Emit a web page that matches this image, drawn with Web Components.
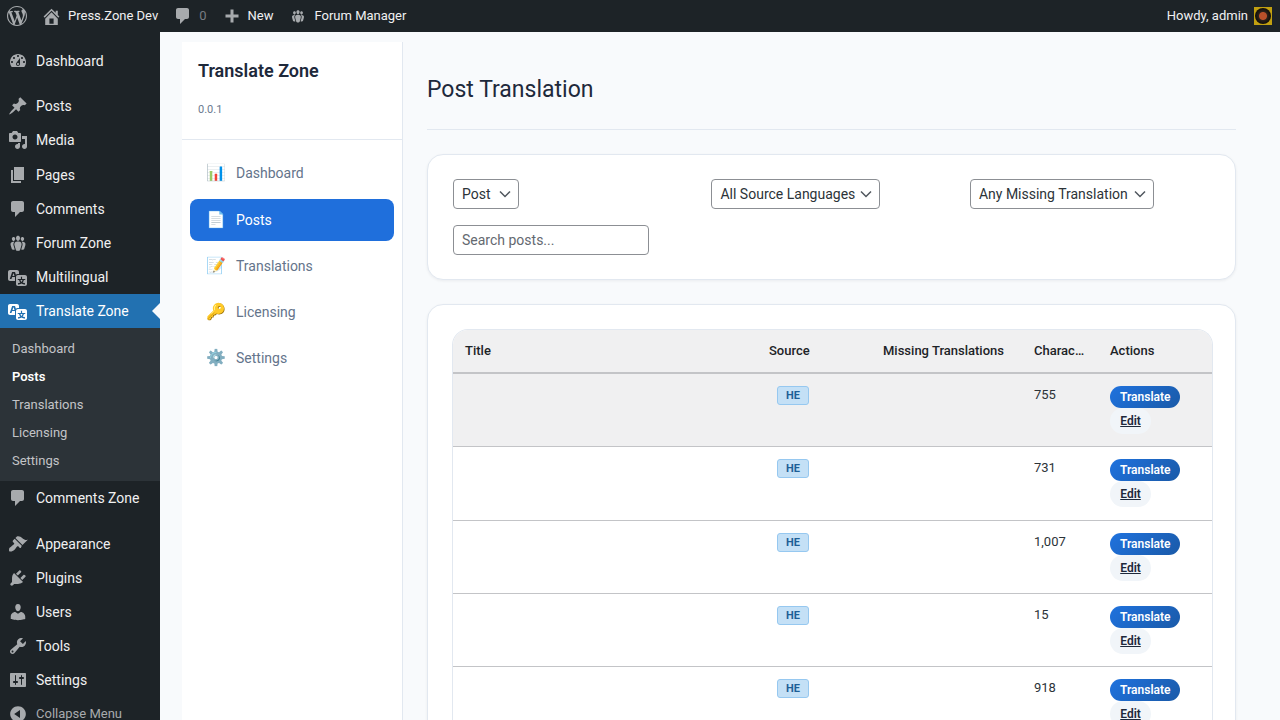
<!DOCTYPE html>
<html lang="en">
<head>
<meta charset="utf-8">
<title>Post Translation</title>
<style>
html, body { margin: 0; height: 720px; overflow: hidden; background: #f8fafc; }
body { font-family: Roboto, "Liberation Sans", sans-serif; display: grid; grid-template-rows: 32px 1fr; grid-template-columns: 160px 1fr; }
wp-admin-bar { grid-column: 1 / 3; }
</style>
</head>
<body>
<wp-admin-bar></wp-admin-bar>
<wp-side-menu></wp-side-menu>
<tz-app></tz-app>

<script>
// ── Dashicons (20x20) ───────────────────────────────────
const ICONS = {
    wp: 'M20 10c0-5.51-4.49-10-10-10C4.48 0 0 4.49 0 10c0 5.52 4.48 10 10 10 5.51 0 10-4.48 10-10zM7.78 15.37L4.37 6.22c.55-.02 1.17-.08 1.17-.08.5-.06.44-1.13-.06-1.11 0 0-1.45.11-2.37.11-.18 0-.37 0-.58-.01C4.12 2.69 6.87 1.11 10 1.11c2.33 0 4.45.87 6.05 2.34-.68-.11-1.65.39-1.65 1.58 0 .74.45 1.36.9 2.1.35.61.55 1.36.55 2.46 0 1.49-1.4 5-1.4 5l-3.03-8.37c.54-.02.82-.17.82-.17.5-.05.44-1.25-.06-1.22 0 0-1.44.12-2.38.12-.87 0-2.33-.12-2.33-.12-.5-.03-.56 1.2-.06 1.22l.92.08 1.26 3.41zM17.41 10c.24-.64.74-1.87.43-4.25.7 1.29 1.05 2.71 1.05 4.25 0 3.29-1.73 6.24-4.4 7.78.97-2.59 1.94-5.2 2.92-7.78zM6.1 18.09C3.12 16.65 1.11 13.53 1.11 10c0-1.3.23-2.48.72-3.59C3.25 10.3 4.67 14.2 6.1 18.09zm4.03-6.63l2.58 6.98c-.86.29-1.76.45-2.71.45-.79 0-1.57-.11-2.29-.33.81-2.38 1.62-4.74 2.42-7.1z',
    home: 'M16 8.5l1.53 1.53-1.06 1.06L10 4.62l-6.47 6.47-1.06-1.06L10 2.5l4 4v-2h2v4zm-6-2.46l6 5.99V18H4v-5.97zM12 17v-5H8v5h4z',
    plus: 'M16.5 8.5v3h-5v5h-3v-5h-5v-3h5v-5h3v5z',
    dashboard: 'M3.76 16h12.48c1.1-1.37 1.76-3.11 1.76-5 0-4.42-3.58-8-8-8s-8 3.58-8 8c0 1.89.66 3.63 1.76 5zM10 4c.55 0 1 .45 1 1s-.45 1-1 1-1-.45-1-1 .45-1 1-1zM6 6c.55 0 1 .45 1 1s-.45 1-1 1-1-.45-1-1 .45-1 1-1zm8 0c.55 0 1 .45 1 1s-.45 1-1 1-1-.45-1-1 .45-1 1-1zm-5.37 5.55L12 7v6c0 1.1-.9 2-2 2s-2-.9-2-2c0-.57.24-1.08.63-1.45zM4 10c.55 0 1 .45 1 1s-.45 1-1 1-1-.45-1-1 .45-1 1-1zm12 0c.55 0 1 .45 1 1s-.45 1-1 1-1-.45-1-1 .45-1 1-1zm-5 3c0-.55-.45-1-1-1s-1 .45-1 1 .45 1 1 1 1-.45 1-1z',
    pin: 'M10.44 3.02l1.82-1.82 6.36 6.35-1.83 1.82c-1.05-.68-2.48-.57-3.41.36l-.75.75c-.92.93-1.04 2.35-.35 3.41l-1.83 1.82-2.41-2.41-2.8 2.79c-.42.42-3.38 2.71-3.8 2.29s1.86-3.39 2.28-3.81l2.79-2.79L4.1 9.36l1.83-1.82c1.05.69 2.48.57 3.4-.36l.75-.75c.93-.92 1.05-2.35.36-3.41z',
    media: 'M13 11V4c0-.55-.45-1-1-1h-1.67L9 1H5L3.67 3H2c-.55 0-1 .45-1 1v7c0 .55.45 1 1 1h10c.55 0 1-.45 1-1zM7 4.5c1.38 0 2.5 1.12 2.5 2.5S8.38 9.5 7 9.5 4.5 8.38 4.5 7 5.62 4.5 7 4.5zM14 6h5v10.5c0 1.38-1.12 2.5-2.5 2.5S14 17.88 14 16.5s1.12-2.5 2.5-2.5c.17 0 .34.02.5.05V9h-3V6zm-4 8.05V13h2v3.5c0 1.38-1.12 2.5-2.5 2.5S7 17.88 7 16.5 8.12 14 9.5 14c.17 0 .34.02.5.05z',
    page: 'M6 15V2h10v13H6zm-1 1h8v2H3V5h2v11z',
    comment: 'M5 2h9c1.1 0 2 .9 2 2v7c0 1.1-.9 2-2 2h-2l-5 5v-5H5c-1.1 0-2-.9-2-2V4c0-1.1.9-2 2-2z',
    groups: 'M8.03 4.46c-.29 1.28.55 3.46 1.97 3.46 1.41 0 2.25-2.18 1.96-3.46-.22-.98-1.08-1.63-1.96-1.63-.89 0-1.74.65-1.97 1.63zm-4.13.9c-.25 1.08.47 2.93 1.67 2.93s1.92-1.85 1.67-2.93c-.19-.83-.92-1.39-1.67-1.39s-1.48.56-1.67 1.39zm8.86 0c-.25 1.08.47 2.93 1.66 2.93 1.2 0 1.92-1.85 1.67-2.93-.19-.83-.92-1.39-1.67-1.39-.74 0-1.47.56-1.66 1.39zm-.59 11.43l1.25-4.3C14.2 10 12.71 8.47 10 8.47c-2.72 0-4.21 1.53-3.44 4.02l1.26 4.3C8.05 17.51 9 18 10 18c.98 0 1.94-.49 2.17-1.21zm-6.1-7.63c-.49.67-.96 1.83-.42 3.59l1.12 3.79c-.34.2-.77.31-1.2.31-.85 0-1.65-.41-1.85-1.03l-1.07-3.65c-.65-2.11.61-3.4 2.92-3.4.27 0 .54.02.79.06-.1.1-.2.22-.29.33zm8.35-.39c2.31 0 3.58 1.29 2.92 3.4l-1.07 3.65c-.2.62-1 1.03-1.85 1.03-.43 0-.86-.11-1.2-.31l1.11-3.77c.55-1.78.08-2.94-.42-3.61-.08-.11-.18-.23-.28-.33.25-.04.51-.06.79-.06z',
    translation: 'M11 7H9.49c-.63 0-1.25.3-1.59.7L7 5H4.13l-2.39 7h1.69l.74-2H7v4H2c-1.1 0-2-.9-2-2V5c0-1.1.9-2 2-2h7c1.1 0 2 .9 2 2v2zM6.51 9H4.49l1-2.93zM10 8h7c1.1 0 2 .9 2 2v7c0 1.1-.9 2-2 2h-7c-1.1 0-2-.9-2-2v-7c0-1.1.9-2 2-2zm7.25 5v-1.08h-3.17V9.75h-1.16v2.17H9.75V13h1.28c.11.85.56 1.85 1.28 2.62-.87.36-1.89.62-2.31.62-.01.02.22.97.2 1.46.84 0 2.21-.5 3.28-1.15 1.09.65 2.48 1.15 3.34 1.15-.02-.49.2-1.44.2-1.46-.43 0-1.49-.27-2.38-.63.7-.77 1.14-1.77 1.25-2.61h1.05zm-3.81 1.93c-.5-.46-.85-1.13-1.01-1.93h2.09c-.17.8-.51 1.47-1 1.93l-.04.03s-.03-.02-.04-.03z',
    appearance: 'M14.48 11.06L7.41 3.99l1.5-1.5c.5-.56 2.3-.47 3.51.32 1.21.8 1.43 1.28 2.91 2.1 1.18.64 2.45 1.26 4.45.85zm-.71.71L6.7 4.7 4.93 6.47c-.39.39-.39 1.02 0 1.41l1.06 1.06c.39.39.39 1.03 0 1.42-.6.6-1.43 1.11-2.21 1.69-.35.26-.7.53-1.01.84C1.43 13.23.99 14.41 1.01 16.23c.02.23.05.47.11.69.23.31.6.54 1.09.63 1.82.02 3-.42 4.34-1.76.31-.31.58-.66.84-1.01.58-.78 1.09-1.61 1.69-2.21.39-.39 1.03-.39 1.42 0l1.06 1.06c.39.39 1.02.39 1.41 0z',
    plugins: 'M13.11 4.36L9.87 7.6 8 5.73l3.24-3.24c.35-.34 1.05-.2 1.56.32.52.51.66 1.21.31 1.55zm-8 1.77l.91-1.12 9.01 9.01-1.19.84c-.71.71-2.63 1.16-3.82 1.16H6.14L4.9 17.26c-.59.59-1.54.59-2.12 0-.59-.58-.59-1.53 0-2.12l1.24-1.24v-3.88c0-1.13.4-3.19 1.09-3.89zm7.26 3.97l3.24-3.24c.34-.35 1.04-.21 1.55.31.52.51.66 1.21.31 1.55l-3.24 3.25z',
    users: 'M10 9.25c-2.27 0-2.73-3.44-2.73-3.44C7 4.02 7.82 2 9.97 2c2.16 0 2.98 2.02 2.71 3.81 0 0-.41 3.44-2.68 3.44zm0 2.57L12.72 10c2.39 0 4.52 2.33 4.52 4.53v2.49s-3.65 1.13-7.24 1.13c-3.65 0-7.24-1.13-7.24-1.13v-2.49c0-2.25 1.94-4.48 4.47-4.48z',
    tools: 'M16.68 9.77c-1.34 1.34-3.3 1.67-4.95.99l-5.41 6.52c-.99.99-2.59.99-3.58 0s-.99-2.59 0-3.57l6.52-5.42c-.68-1.65-.35-3.61.99-4.95 1.28-1.28 3.12-1.62 4.72-1.06l-2.89 2.89 2.82 2.82 2.86-2.87c.53 1.58.18 3.39-1.08 4.65zM3.81 16.21c.4.39 1.04.39 1.43 0 .4-.4.4-1.04 0-1.43-.39-.4-1.03-.4-1.43 0-.39.39-.39 1.03 0 1.43z',
    settings: 'M18 16V4c0-.55-.45-1-1-1H3c-.55 0-1 .45-1 1v12c0 .55.45 1 1 1h14c.55 0 1-.45 1-1zM8 11h1c.55 0 1 .45 1 1s-.45 1-1 1H8v1.5c0 .28-.22.5-.5.5s-.5-.22-.5-.5V13H6c-.55 0-1-.45-1-1s.45-1 1-1h1V5.5c0-.28.22-.5.5-.5s.5.22.5.5V11zm5-2h-1c-.55 0-1-.45-1-1s.45-1 1-1h1V5.5c0-.28.22-.5.5-.5s.5.22.5.5V7h1c.55 0 1 .45 1 1s-.45 1-1 1h-1v5.5c0 .28-.22.5-.5.5s-.5-.22-.5-.5V9z',
    collapse: 'M10 2.16c4.33 0 7.84 3.51 7.84 7.84s-3.51 7.84-7.84 7.84S2.16 14.33 2.16 10 5.71 2.16 10 2.16zm2 11.72V6.12L6.18 9.97z',
};
const icon = (name, size = 20) =>
    `<svg width="${size}" height="${size}" viewBox="0 0 20 20" fill="currentColor" fill-rule="evenodd" aria-hidden="true"><path d="${ICONS[name]}"/></svg>`;

// ── Admin bar ───────────────────────────────────────────
class WpAdminBar extends HTMLElement {
    connectedCallback() {
        const shadow = this.attachShadow({ mode: 'open' });
        shadow.innerHTML = `
<style>
:host { display: flex; height: 32px; align-items: center; background: #1d2327; color: #f0f0f1; font: 13px/32px Roboto, sans-serif; }
svg { color: #a7aaad; flex: none; display: block; }
.item { display: flex; align-items: center; gap: 6px; }
.logo { margin-left: 7px; }
.home { margin-left: 14px; }
.comments { margin-left: 15px; }
.comments span { color: #787c82; }
.new { margin-left: 15px; }
.forum { margin-left: 17px; gap: 8px; }
.howdy { margin-left: auto; margin-right: 8px; }
.avatar { width: 18px; height: 18px; background: #c2a010; display: grid; place-items: center; }
.avatar i { width: 16px; height: 16px; border-radius: 50%; background: radial-gradient(circle at 50% 50%, #b8502a 0 3.5px, #2a211a 4.5px, #0f0d0a 8px); }
</style>
<div class="item logo">${icon('wp')}</div>
<div class="item home">${icon('home', 21)}<span>Press.Zone Dev</span></div>
<div class="item comments">${icon('comment')}<span>0</span></div>
<div class="item new">${icon('plus')}<span>New</span></div>
<div class="item forum">${icon('groups', 16)}<span>Forum Manager</span></div>
<div class="item howdy"><span>Howdy, admin</span><div class="avatar"><i></i></div></div>`;
    }
}
customElements.define('wp-admin-bar', WpAdminBar);

// ── Left admin menu ─────────────────────────────────────
class WpMenuItem extends HTMLElement {
    connectedCallback() {
        const shadow = this.attachShadow({ mode: 'open' });
        shadow.innerHTML = `
<style>
:host { display: flex; align-items: center; gap: 8px; height: 34.17px; padding-left: 8px; color: #f0f0f1; position: relative; }
:host([active]) { background: #2271b1; color: #fff; }
:host([active]) svg { color: #fff; }
:host([active])::after {
    content: ''; position: absolute; right: 0; top: 50%; margin-top: -8px;
    border: 8px solid transparent; border-right-color: #f8fafc;
}
:host([dim]) { color: #a7aaad; font-size: 13px; }
svg { color: #a7aaad; flex: none; display: block; }
</style>
${icon(this.getAttribute('icon'))}<slot></slot>`;
    }
}
customElements.define('wp-menu-item', WpMenuItem);

class WpSideMenu extends HTMLElement {
    connectedCallback() {
        const shadow = this.attachShadow({ mode: 'open' });
        shadow.innerHTML = `
<style>
:host { display: block; background: #1d2327; font: 14px/18px Roboto, sans-serif; padding-top: 12px; overflow: hidden; }
.sep { height: 11px; }
.sep.wide { height: 12px; }
.sub { background: #2c3338; padding: 7px 0 6px; font-size: 13px; color: #c3c4c7; }
.sub div { height: 28px; line-height: 28px; padding-left: 12px; }
.sub .on { color: #fff; font-weight: 600; }
.low wp-menu-item { height: 34px; }
</style>
<wp-menu-item icon="dashboard">Dashboard</wp-menu-item>
<div class="sep"></div>
<wp-menu-item icon="pin">Posts</wp-menu-item>
<wp-menu-item icon="media">Media</wp-menu-item>
<wp-menu-item icon="page">Pages</wp-menu-item>
<wp-menu-item icon="comment">Comments</wp-menu-item>
<wp-menu-item icon="groups">Forum Zone</wp-menu-item>
<wp-menu-item icon="translation">Multilingual</wp-menu-item>
<wp-menu-item icon="translation" active>Translate Zone</wp-menu-item>
<div class="sub">
    <div>Dashboard</div>
    <div class="on">Posts</div>
    <div>Translations</div>
    <div>Licensing</div>
    <div>Settings</div>
</div>
<wp-menu-item icon="comment">Comments Zone</wp-menu-item>
<div class="sep wide"></div>
<div class="low">
    <wp-menu-item icon="appearance">Appearance</wp-menu-item>
    <wp-menu-item icon="plugins">Plugins</wp-menu-item>
    <wp-menu-item icon="users">Users</wp-menu-item>
    <wp-menu-item icon="tools">Tools</wp-menu-item>
    <wp-menu-item icon="settings">Settings</wp-menu-item>
    <wp-menu-item icon="collapse" dim>Collapse Menu</wp-menu-item>
</div>`;
    }
}
customElements.define('wp-side-menu', WpSideMenu);

// ── Plugin sidebar ──────────────────────────────────────
class TzNavItem extends HTMLElement {
    connectedCallback() {
        const shadow = this.attachShadow({ mode: 'open' });
        shadow.innerHTML = `
<style>
:host { display: flex; align-items: center; height: 42px; padding-left: 16px; gap: 10px; border-radius: 8px; color: #64748b; font-size: 14px; }
:host([active]) { background: #1f6fdc; color: #fff; }
.emoji { font: 16px/1 "Noto Color Emoji", sans-serif; width: 20px; text-align: center; }
</style>
<span class="emoji">${this.getAttribute('emoji')}</span><slot></slot>`;
    }
}
customElements.define('tz-nav-item', TzNavItem);

class TzSidebar extends HTMLElement {
    connectedCallback() {
        const shadow = this.attachShadow({ mode: 'open' });
        shadow.innerHTML = `
<style>
:host { display: block; width: 220px; background: #fff; border-right: 1px solid #e2e8f0; margin-top: 10px; }
.head { padding: 16px 16px 0; height: 81px; border-bottom: 1px solid #e2e8f0; }
h1 { margin: 0; font-size: 18px; line-height: 26px; font-weight: 600; color: #1e293b; }
p { margin: 19px 0 0; font-size: 11px; line-height: 14px; color: #6b7a90; }
nav { display: flex; flex-direction: column; gap: 4px; padding: 12px 8px; }
tz-nav-item[active] { margin-top: 1px; }
</style>
<div class="head"><h1>Translate Zone</h1><p>0.0.1</p></div>
<nav>
    <tz-nav-item emoji="📊">Dashboard</tz-nav-item>
    <tz-nav-item emoji="📄" active>Posts</tz-nav-item>
    <tz-nav-item emoji="📝">Translations</tz-nav-item>
    <tz-nav-item emoji="🔑">Licensing</tz-nav-item>
    <tz-nav-item emoji="⚙️">Settings</tz-nav-item>
</nav>`;
    }
}
customElements.define('tz-sidebar', TzSidebar);

// ── Form controls and cards ─────────────────────────────
class TzSelect extends HTMLElement {
    connectedCallback() {
        const shadow = this.attachShadow({ mode: 'open' });
        shadow.innerHTML = `
<style>
:host { display: inline-flex; align-items: center; justify-content: space-between; justify-self: start; height: 30px; box-sizing: border-box; padding: 0 5px 0 8px; border: 1px solid #8c8f94; border-radius: 4px; background: #fff; color: #2c3338; font-size: 14px; }
svg { display: block; flex: none; }
</style>
<slot></slot><svg width="16" height="16" viewBox="0 0 16 16" fill="none" stroke="#50575e" stroke-width="1.5"><path d="M3 5.5l5 5 5-5"/></svg>`;
    }
}
customElements.define('tz-select', TzSelect);

class TzCard extends HTMLElement {
    connectedCallback() {
        const shadow = this.attachShadow({ mode: 'open' });
        shadow.innerHTML = `
<style>
:host { display: block; background: #fff; border: 1px solid #e2e8f0; border-radius: 16px; box-shadow: 0 1px 3px rgba(15,23,42,.06); padding: 24px; }
</style>
<slot></slot>`;
    }
}
customElements.define('tz-card', TzCard);

class TzFilters extends HTMLElement {
    connectedCallback() {
        const shadow = this.attachShadow({ mode: 'open' });
        shadow.innerHTML = `
<style>
:host { display: grid; grid-template-columns: repeat(3, 1fr); gap: 16px; padding-left: 1px; margin-right: -1.4px; }
input { width: 196px; height: 30px; box-sizing: border-box; border: 1px solid #8c8f94; border-radius: 4px; padding: 0 8px; font: 14px Roboto, sans-serif; color: #2c3338; background: #fff; outline: none; }
input::placeholder { color: #646970; opacity: 1; }
</style>
<tz-select style="width:66px">Post</tz-select>
<tz-select style="width:169px">All Source Languages</tz-select>
<tz-select style="width:184px">Any Missing Translation</tz-select>
<input type="text" placeholder="Search posts...">`;
    }
}
customElements.define('tz-filters', TzFilters);

// ── Posts table ─────────────────────────────────────────
const COLUMNS = '304px 114px 151px 76px 1fr';

class TzRow extends HTMLElement {
    connectedCallback() {
        const shadow = this.attachShadow({ mode: 'open' });
        shadow.innerHTML = `
<style>
:host { display: grid; grid-template-columns: ${COLUMNS}; height: 73.33px; box-sizing: border-box; border-bottom: 1px solid #c3c4c7; font-size: 13px; line-height: 18px; color: #2c3338; background: #fff; }
:host([hover]) { background: #f0f0f1; }
.cell { padding: 12px 12px 0; min-width: 0; }
.badge { display: inline-block; margin-left: 8px; width: 32px; height: 19px; box-sizing: border-box; border: 1px solid #96c8f0; border-radius: 3px; background: #c4e0f6; color: #1e5f96; font-size: 11px; font-weight: 700; line-height: 17px; text-align: center; }
.actions { display: flex; flex-direction: column; align-items: flex-start; }
.btn { height: 22px; line-height: 22px; padding: 0 10px; border-radius: 11px; font-size: 12px; font-weight: 600; }
.go { background: linear-gradient(135deg, #1f72de, #1a5aa8); color: #fff; }
.edit { height: 26px; line-height: 26px; border-radius: 13px; background: #f1f5f9; color: #1e293b; text-decoration: underline; width: 21px; text-align: center; }
</style>
<div class="cell"></div>
<div class="cell"><span class="badge">HE</span></div>
<div class="cell"></div>
<div class="cell">${this.getAttribute('chars')}</div>
<div class="cell actions"><span class="btn go">Translate</span><span class="btn edit">Edit</span></div>`;
    }
}
customElements.define('tz-row', TzRow);

class TzTable extends HTMLElement {
    connectedCallback() {
        const shadow = this.attachShadow({ mode: 'open' });
        shadow.innerHTML = `
<style>
:host { display: block; margin-right: -2px; border: 1px solid #e2e8f0; border-bottom: 0; border-radius: 16px 16px 0 0; overflow: hidden; }
.head { display: grid; grid-template-columns: ${COLUMNS}; height: 44px; box-sizing: border-box; border-bottom: 2px solid #c3c4c7; background: #f0f0f1; font-size: 13px; font-weight: 500; line-height: 42px; color: #1d2327; }
.head div { padding: 0 12px; white-space: nowrap; overflow: hidden; text-overflow: ellipsis; min-width: 0; }
</style>
<div class="head"><div>Title</div><div>Source</div><div>Missing Translations</div><div>Characters</div><div>Actions</div></div>
<tz-row chars="755" hover></tz-row>
<tz-row chars="731"></tz-row>
<tz-row chars="1,007"></tz-row>
<tz-row chars="15"></tz-row>
<tz-row chars="918"></tz-row>`;
    }
}
customElements.define('tz-table', TzTable);

// ── Plugin page ─────────────────────────────────────────
class TzApp extends HTMLElement {
    connectedCallback() {
        const shadow = this.attachShadow({ mode: 'open' });
        shadow.innerHTML = `
<style>
:host { display: flex; min-width: 0; padding-left: 22px; overflow: hidden; font-family: Roboto, sans-serif; }
main { flex: 1; min-width: 0; padding: 0 44px 0 24px; }
h2 { margin: 0; height: 98px; box-sizing: border-box; padding-top: 41px; border-bottom: 1px solid #e2e8f0; font-size: 23px; line-height: 34px; font-weight: 400; color: #1e293b; }
tz-card { margin-top: 24px; }
</style>
<tz-sidebar></tz-sidebar>
<main>
    <h2>Post Translation</h2>
    <tz-card><tz-filters></tz-filters></tz-card>
    <tz-card><tz-table></tz-table></tz-card>
</main>`;
    }
}
customElements.define('tz-app', TzApp);
</script>
</body>
</html>
